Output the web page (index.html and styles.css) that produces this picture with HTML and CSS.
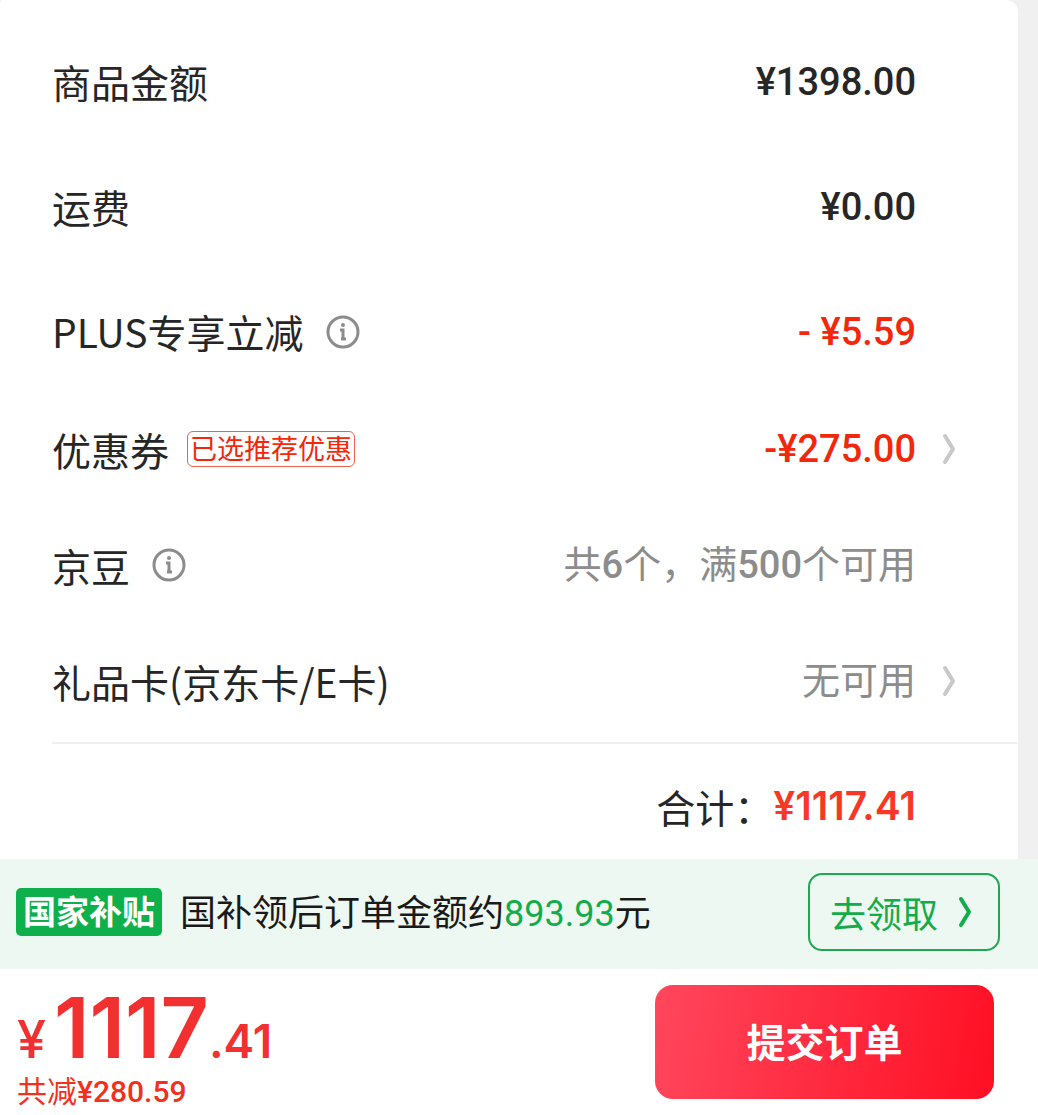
FILE: index.html
```html
<!DOCTYPE html>
<html lang="zh-CN">
<head>
    <meta charset="UTF-8">
    <meta name="viewport" content="width=device-width, initial-scale=1.0">
    <title>确认订单</title>
    <link rel="stylesheet" href="styles.css">
</head>
<body>
    <main class="card">
        <div class="row">
            <span class="label">商品金额</span>
            <span class="value">¥1398.00</span>
        </div>
        <div class="row">
            <span class="label">运费</span>
            <span class="value">¥0.00</span>
        </div>
        <div class="row">
            <span class="label">PLUS专享立减</span>
            <button class="info" aria-label="PLUS专享立减说明">
                <svg viewBox="0 0 34 34"><circle cx="17" cy="17" r="15"/><path class="stem" d="M14 15h3v9M15 24h5"/><circle class="dot" cx="17" cy="10" r="2"/></svg>
            </button>
            <span class="value red">- ¥5.59</span>
        </div>
        <div class="row short">
            <span class="label">优惠券</span>
            <span class="tag">已选推荐优惠</span>
            <a class="value red" href="#coupon">-¥275.00
                <svg class="arrow" viewBox="0 0 14 32"><path d="M3 3l8 13-8 13"/></svg>
            </a>
        </div>
        <div class="row short">
            <span class="label">京豆</span>
            <button class="info" aria-label="京豆说明">
                <svg viewBox="0 0 34 34"><circle cx="17" cy="17" r="15"/><path class="stem" d="M14 15h3v9M15 24h5"/><circle class="dot" cx="17" cy="10" r="2"/></svg>
            </button>
            <span class="value gray">共<b>6</b>个，满<b>500</b>个可用</span>
        </div>
        <div class="row short">
            <span class="label">礼品卡(京东卡/E卡)</span>
            <a class="value gray" href="#giftcard">无可用
                <svg class="arrow" viewBox="0 0 14 32"><path d="M3 3l8 13-8 13"/></svg>
            </a>
        </div>
        <div class="total">
            <span class="label">合计：</span>
            <span class="sum">¥1117.41</span>
        </div>
    </main>

    <section class="subsidy">
        <span class="badge">国家补贴</span>
        <p class="subsidy-text">国补领后订单金额约<span class="amount">893.93</span>元</p>
        <button class="claim">去领取
            <svg class="arrow" viewBox="0 0 14 32"><path d="M3 3l8 13-8 13"/></svg>
        </button>
    </section>

    <footer class="checkout">
        <div>
            <p class="price"><span class="yen">¥</span><span class="big">1117</span>.41</p>
            <p class="saved">共减<b>¥280.59</b></p>
        </div>
        <button class="submit">提交订单</button>
    </footer>
</body>
</html>
```

FILE: styles.css
```css
* {
    box-sizing: border-box;
}
body {
    margin: 0;
    background-color: #f0f0f0;
    color: #262626;
    font-family: "Noto Sans CJK SC", sans-serif;
    font-size: 38px;
    line-height: 56px;
}
p {
    margin: 0;
}
button {
    padding: 0;
    border: none;
    background: none;
    font-family: inherit;
    cursor: pointer;
}
b {
    font-family: Roboto, sans-serif;
    font-weight: 500;
}
.card {
    margin-right: 20px;
    padding: 19px 0 0 52px;
    border-radius: 4px 12px 0 0;
    background-color: #fff;
}
.row {
    display: flex;
    align-items: center;
    height: 125px;
    padding-right: 102px;
}
.row.short {
    height: 116px;
    padding-bottom: 6px;
}
.label {
    padding-bottom: 2px;
    font-size: 39px;
}
.short .label {
    padding-bottom: 0;
}
.value {
    position: relative;
    margin-left: auto;
    font-family: Roboto, "Noto Sans CJK SC", sans-serif;
    font-weight: 500;
    text-decoration: none;
}
.red {
    color: #f2270c;
}
.gray {
    color: #8c8c8c;
    font-weight: 400;
}
.info {
    display: flex;
    width: 34px;
    height: 34px;
    margin-left: 22px;
}
.info svg {
    width: 34px;
    height: 34px;
    fill: none;
    stroke: #8c8c8c;
    stroke-width: 3;
}
.info .dot {
    fill: #8c8c8c;
    stroke: none;
}
.tag {
    height: 36px;
    margin-left: 18px;
    padding: 0 2px;
    border: 1px solid #f2604d;
    border-radius: 6px;
    color: #f2270c;
    font-size: 27px;
    line-height: 32px;
}
.arrow {
    width: 14px;
    height: 32px;
    fill: none;
    stroke: #c8c8c8;
    stroke-width: 4;
    stroke-linecap: round;
    stroke-linejoin: round;
}
/* the arrow hangs in the right gutter so that all values stay aligned */
.value .arrow {
    position: absolute;
    top: 12px;
    right: -40px;
}
.total {
    display: flex;
    justify-content: flex-end;
    padding: 34px 102px 23px 0;
    border-top: 2px solid #f0f0f0;
}
.sum {
    color: #fa3725;
    font-family: Inter, sans-serif;
    font-size: 39px;
    font-weight: 600;
}
.subsidy {
    display: flex;
    align-items: center;
    height: 110px;
    padding: 0 38px 4px 16px;
    background-color: #edf8f3;
    color: #1a1a1a;
    font-size: 36px;
}
.badge {
    height: 48px;
    margin-right: 18px;
    padding: 0 7px;
    border-radius: 5px;
    background-color: #0eb04b;
    color: #fff;
    font-size: 33px;
    font-weight: 700;
    line-height: 44px;
}
.amount {
    color: #12ad4a;
    font-family: Roboto, sans-serif;
}
.claim {
    display: flex;
    align-items: center;
    gap: 20px;
    height: 78px;
    margin-left: auto;
    padding: 0 26px 0 20px;
    border: 2px solid #1fa850;
    border-radius: 14px;
    color: #12ad4a;
    font-size: 36px;
}
.claim .arrow {
    stroke: #12ad4a;
}
.checkout {
    display: flex;
    align-items: center;
    justify-content: space-between;
    height: 146px;
    padding: 0 44px 0 17px;
    background-color: #fff;
}
.price {
    padding-top: 24px;
    color: #f23030;
    font-family: Inter, sans-serif;
    font-size: 46px;
    font-weight: 600;
    line-height: 60px;
}
.yen {
    margin-right: 8px;
    font-size: 52px;
    font-weight: 500;
}
.big {
    font-size: 84px;
}
.saved {
    color: #f2301c;
    font-size: 30px;
    line-height: 36px;
}
.submit {
    width: 339px;
    height: 114px;
    padding-bottom: 5px;
    border-radius: 18px;
    background-image: linear-gradient(100deg, #ff475d, #ff0f23);
    color: #fff;
    font-size: 39px;
    font-weight: 700;
}
```
